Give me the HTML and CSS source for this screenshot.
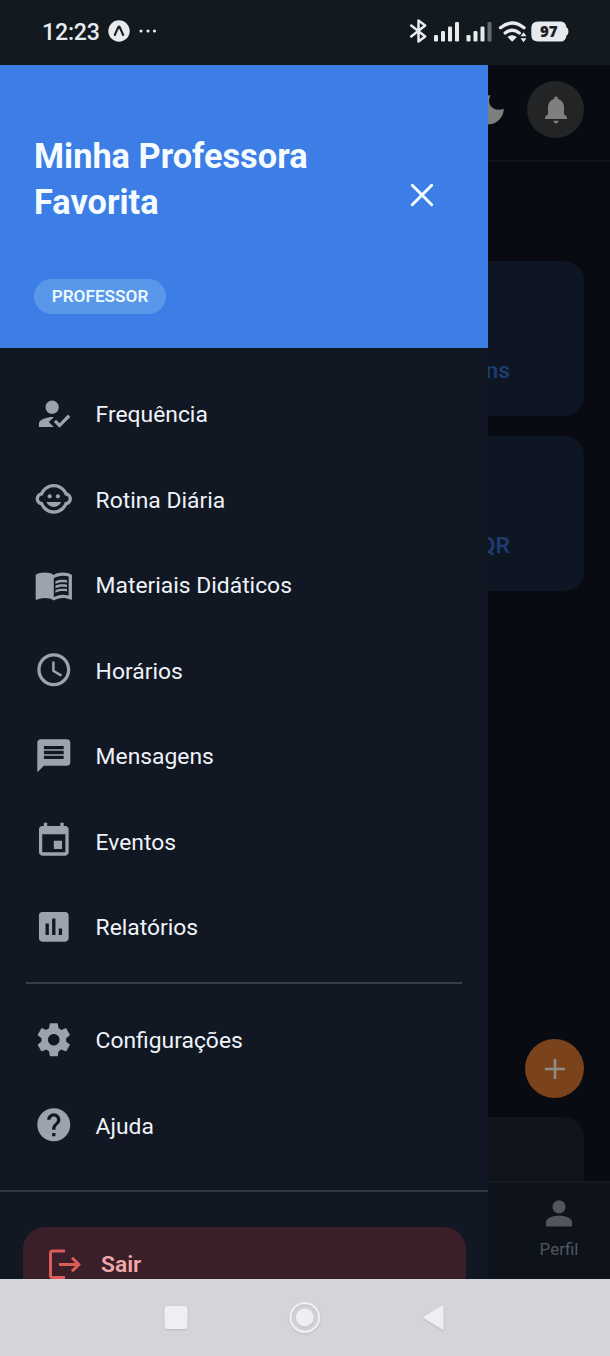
FILE: index.html
```html
<!DOCTYPE html>
<html lang="pt-BR">
<head>
<meta charset="utf-8">
<title>Minha Professora Favorita</title>
<link rel="stylesheet" href="styles.css">
</head>
<body>
<div class="phone">
  <header class="status">
    <span class="clock">12:23</span>
    <svg class="expo" width="22" height="22" viewBox="0 0 22 22"><circle cx="11" cy="11" r="10.7" fill="#e8ebee"/><path d="M6.8 15 L10.2 7.3 Q11 6 11.8 7.3 L15.2 15" fill="none" stroke="#1b2025" stroke-width="2.1" stroke-linecap="round"/></svg>
    <svg class="dots" width="20" height="6" viewBox="0 0 20 6" fill="#e8ebee"><circle cx="3" cy="3" r="1.6"/><circle cx="10" cy="3" r="1.6"/><circle cx="16.500" cy="3" r="1.6"/></svg>
    <span class="spacer"></span>
    <svg class="signals" width="160" height="26" viewBox="0 0 160 26" fill="#e8ebee">
      <path d="M2.200 7.500 L16.200 18.500 L9.500 23.500 V2.500 L16.200 7.500 L2.200 18.500" fill="none" stroke="#e8ebee" stroke-width="2.500" stroke-linejoin="round" stroke-linecap="round"/>
      <rect x="25" y="17" width="4" height="6.500" rx="1.300"/><rect x="32" y="13" width="4" height="10.500" rx="1.300"/><rect x="39" y="8.500" width="4" height="15" rx="1.300"/><rect x="46" y="4" width="4" height="19.500" rx="1.300"/>
      <rect x="57.500" y="17" width="4" height="6.500" rx="1.300"/><rect x="64.500" y="13" width="4" height="10.500" rx="1.300"/><rect x="71.500" y="8.500" width="4" height="15" rx="1.300"/><rect x="78.500" y="4" width="4" height="19.500" rx="1.300" fill="#666b70"/>
      <g fill="none" stroke="#e8ebee" stroke-width="3.300" stroke-linecap="round"><path d="M91.500 9.800 Q103.200 0.300 115 9.800"/><path d="M96.200 15 Q103.200 9.400 110.300 15"/></g>
      <path d="M98.500 19 Q103.200 15.500 107.900 19 L103.200 23.800 Z"/>
      <path d="M114.500 14.300 l3 3.900 h-6 z M114.500 24.200 l3 -3.900 h-6 z"/>
      <path d="M129 3.500 H152 Q156.500 3.500 157.600 9.500 Q159.500 10.200 159.500 13.500 Q159.500 16.800 157.600 17.500 Q156.500 23.500 152 23.500 H129 Q122.300 23.500 122.300 17 V10 Q122.300 3.500 129 3.500Z"/>
      <text x="139.800" y="18.800" text-anchor="middle" class="battery">97</text>
    </svg>
  </header>

  <main class="screen">
    <nav class="drawer">
      <div class="drawer-head">
        <div class="title-row">
          <h1>Minha Professora Favorita</h1>
          <svg class="close" width="24" height="24" viewBox="0 0 24 24"><path d="M2.300 2.300 21.700 21.700M21.700 2.300 2.300 21.700" stroke="#f5fcff" stroke-width="3" stroke-linecap="round"/></svg>
        </div>
        <span class="chip">PROFESSOR</span>
      </div>
      <ul class="menu">
        <li><svg viewBox="0 0 24 24"><path d="M9 17l3-2.940c-.39-.04-.68-.06-1-.06-2.670 0-8 1.340-8 4v2h9l-3-3zm2-5c2.210 0 4-1.790 4-4s-1.790-4-4-4-4 1.790-4 4 1.790 4 4 4m4.470 8.500L12 17l1.400-1.410 2.070 2.080 5.130-5.170 1.400 1.410z"/></svg><span>Frequência</span></li>
        <li><svg viewBox="0 0 24 24"><circle cx="14.500" cy="10.500" r="1.250"/><circle cx="9.500" cy="10.500" r="1.250"/><path d="M22.940 12.660c.04-.21.06-.43.06-.66s-.02-.45-.06-.66c-.25-1.510-1.360-2.740-2.810-3.170-.53-1.120-1.280-2.100-2.190-2.910C16.360 3.850 14.280 3 12 3s-4.360.85-5.940 2.260c-.92.81-1.670 1.800-2.190 2.910-1.450.43-2.560 1.650-2.810 3.170-.04.21-.06.43-.06.66s.02.45.06.66c.25 1.510 1.360 2.740 2.810 3.170.52 1.110 1.270 2.090 2.170 2.890C7.620 20.140 9.710 21 12 21s4.380-.86 5.970-2.280c.9-.8 1.650-1.790 2.170-2.890 1.440-.43 2.550-1.650 2.800-3.170zM19 14c-.1 0-.19-.02-.29-.03-.2.67-.49 1.290-.86 1.860C16.600 17.740 14.450 19 12 19s-4.600-1.260-5.850-3.170c-.37-.57-.66-1.190-.86-1.860-.1.01-.19.03-.29.03-1.100 0-2-.9-2-2s.9-2 2-2c.1 0 .19.02.29.03.2-.67.49-1.290.86-1.860C7.400 6.260 9.550 5 12 5s4.600 1.260 5.850 3.170c.37.57.66 1.190.86 1.860.1-.01.19-.03.29-.03 1.100 0 2 .9 2 2s-.9 2-2 2zM7.500 14c.76 1.770 2.490 3 4.500 3s3.740-1.230 4.500-3h-9z"/></svg><span>Rotina Diária</span></li>
        <li><svg viewBox="0 0 24 24"><path d="M21 5c-1.110-.35-2.330-.5-3.500-.5-1.950 0-4.050.4-5.500 1.500-1.450-1.100-3.550-1.500-5.500-1.500S2.450 4.900 1 6v14.650c0 .25.25.5.5.5.1 0 .15-.05.25-.05C3.100 20.450 5.050 20 6.500 20c1.950 0 4.050.4 5.500 1.500 1.350-.85 3.800-1.500 5.500-1.500 1.650 0 3.350.3 4.750 1.050.1.05.15.05.25.05.25 0 .5-.25.5-.5V6c-.6-.45-1.250-.75-2-1zm0 13.500c-1.100-.35-2.300-.5-3.500-.5-1.700 0-4.150.65-5.500 1.500V8c1.350-.85 3.800-1.500 5.500-1.500 1.200 0 2.400.15 3.500.5v11.500z"/><path d="M17.500 10.500c.88 0 1.730.09 2.500.26V9.240c-.79-.15-1.640-.24-2.500-.24-1.700 0-3.240.29-4.500.83v1.660c1.130-.64 2.700-.99 4.500-.99zM13 12.490v1.660c1.130-.64 2.700-.99 4.500-.99.88 0 1.730.09 2.500.26V11.900c-.79-.15-1.640-.24-2.500-.24-1.700 0-3.240.3-4.500.83zM17.500 14.330c-1.700 0-3.240.29-4.500.83v1.660c1.130-.64 2.700-.99 4.500-.99.88 0 1.730.09 2.500.26v-1.520c-.79-.16-1.640-.24-2.500-.24z"/></svg><span>Materiais Didáticos</span></li>
        <li><svg viewBox="0 0 24 24"><path d="M11.990 2C6.470 2 2 6.480 2 12s4.470 10 9.990 10C17.520 22 22 17.520 22 12S17.520 2 11.990 2zM12 20c-4.420 0-8-3.580-8-8s3.580-8 8-8 8 3.580 8 8-3.580 8-8 8zm.5-13H11v6l5.250 3.150.75-1.230-4.500-2.670z"/></svg><span>Horários</span></li>
        <li><svg viewBox="0 0 24 24"><path d="M20 2H4c-1.100 0-1.990.9-1.990 2L2 22l4-4h14c1.100 0 2-.9 2-2V4c0-1.100-.9-2-2-2zm-2 12H6v-2h12v2zm0-3H6V9h12v2zm0-3H6V6h12v2z"/></svg><span>Mensagens</span></li>
        <li><svg viewBox="0 0 24 24"><path d="M17 12h-5v5h5v-5zM16 1v2H8V1H6v2H5c-1.110 0-1.990.9-1.990 2L3 19c0 1.100.89 2 2 2h14c1.100 0 2-.9 2-2V5c0-1.100-.9-2-2-2h-1V1h-2zm3 18H5V8h14v11z"/></svg><span>Eventos</span></li>
        <li><svg viewBox="0 0 24 24"><path d="M19 3H5c-1.100 0-2 .9-2 2v14c0 1.100.9 2 2 2h14c1.100 0 2-.9 2-2V5c0-1.100-.9-2-2-2zM9 17H7v-7h2v7zm4 0h-2V7h2v10zm4 0h-2v-4h2v4z"/></svg><span>Relatórios</span></li>
      </ul>
      <div class="divider"></div>
      <ul class="menu menu-secondary">
        <li><svg viewBox="0 0 24 24"><path d="M19.430 12.980c.04-.32.07-.64.07-.98s-.03-.66-.07-.98l2.110-1.650c.19-.15.24-.42.12-.64l-2-3.460c-.12-.22-.39-.3-.61-.22l-2.490 1c-.52-.4-1.080-.73-1.690-.98l-.38-2.650C14.460 2.180 14.250 2 14 2h-4c-.25 0-.46.18-.49.42l-.38 2.650c-.61.25-1.170.59-1.690.98l-2.490-1c-.23-.09-.49 0-.61.22l-2 3.460c-.13.22-.07.49.12.64l2.110 1.650c-.04.32-.07.65-.07.98s.03.66.07.98l-2.110 1.650c-.19.15-.24.42-.12.64l2 3.460c.12.22.39.3.61.22l2.490-1c.52.4 1.080.73 1.690.98l.38 2.650c.03.24.24.42.49.42h4c.25 0 .46-.18.49-.42l.38-2.650c.61-.25 1.170-.59 1.690-.98l2.490 1c.23.09.49 0 .61-.22l2-3.460c.12-.22.07-.49-.12-.64l-2.110-1.650zM12 15.500c-1.930 0-3.500-1.570-3.500-3.500s1.570-3.500 3.500-3.500 3.500 1.570 3.500 3.500-1.570 3.500-3.500 3.500z"/></svg><span>Configurações</span></li>
        <li><svg viewBox="0 0 24 24"><path d="M12 2C6.480 2 2 6.480 2 12s4.480 10 10 10 10-4.480 10-10S17.520 2 12 2zm1 17h-2v-2h2v2zm2.070-7.750l-.9.92C13.450 12.900 13 13.500 13 15h-2v-.5c0-1.100.45-2.100 1.170-2.830l1.240-1.260c.37-.36.59-.86.59-1.410 0-1.100-.9-2-2-2s-2 .9-2 2H8c0-2.210 1.790-4 4-4s4 1.790 4 4c0 .88-.36 1.680-.93 2.250z"/></svg><span>Ajuda</span></li>
      </ul>
      <div class="drawer-foot">
        <div class="logout">
          <svg width="34" height="32" viewBox="0 0 34 32" fill="none" stroke="#dd5b58" stroke-width="3"><path d="M17 2H4.500Q2.500 2 2.500 4V26.500Q2.500 28.500 4.500 28.500H17"/><path d="M11 15.500H31.500M24 8.700 30.800 15.500 24 22.300"/></svg>
          <span>Sair</span>
        </div>
      </div>
    </nav>

    <section class="page">
      <div class="topbar">
        <svg class="moon" width="19" height="32" viewBox="0 0 19 32"><path d="M0 1.200 L2.500 1.500 C-1.500 9 3.500 18.500 15.800 14.800 C15.500 25 7 31 0 30.200Z" fill="#7e7f80"/></svg>
        <div class="bell"><svg width="24" height="28" viewBox="0 0 24 28" fill="#7e7f80"><path d="M12 .5C13.500 .5 14 1.500 14 3C18 4 20 7.500 20 11.500V18L23 21V23H1V21L4 18V11.500C4 7.500 6 4 10 3C10 1.500 10.500 .5 12 .5Z"/><path d="M9.300 24.700H14.700Q14 27.400 12 27.400T9.300 24.700Z"/></svg></div>
      </div>
      <div class="cards">
        <div class="card">ns</div>
        <div class="card">QR</div>
      </div>
      <div class="lower">
        <div class="fab"><svg width="20" height="20" viewBox="0 0 20 20"><path d="M10 0V20M0 10H20" stroke="#918a85" stroke-width="2.600"/></svg></div>
        <div class="panel"></div>
      </div>
      <div class="tabbar">
        <svg width="26" height="27" viewBox="0 0 26 27" fill="#50555e"><circle cx="13" cy="6.800" r="6.600"/><path d="M0 26.500V22C0 17.500 8 15.700 13 15.700S26 17.500 26 22V26.500Z"/></svg>
        <span>Perfil</span>
      </div>
    </section>
  </main>

  <footer class="sysnav">
    <svg width="610" height="77" viewBox="0 0 610 77">
      <g class="keys" fill="#eeeff3"><rect x="164.500" y="27" width="23" height="23" rx="3.500"/><circle cx="304.800" cy="38.500" r="9"/><path d="M422.500 38.500 442 26.500Q443.500 26 443.500 27.500V49.500Q443.500 51 442 50.200Z"/></g>
      <circle class="keys" cx="304.800" cy="38.500" r="14.300" fill="none" stroke="#eeeff3" stroke-width="2.300"/>
    </svg>
  </footer>
</div>
</body>
</html>
```
FILE: styles.css
```css
* { box-sizing: border-box; }
body { margin: 0; font-family: Roboto, "Liberation Sans", sans-serif; background: #080b11; }
svg { display: block; flex: none; }
.phone { width: 610px; height: 1356px; display: grid; grid-template-rows: 65px 1214px 77px; overflow: hidden; }

.status { display: flex; align-items: center; padding: 0 41px 3px 42px; background: #12191f; color: #e8ebee; }
.clock { width: 58px; font-size: 23.200px; font-weight: 500; letter-spacing: -0.200px; line-height: 28px; padding-top: 2px; }
.expo { margin-left: 8px; }
.dots { margin-left: 8px; }
.spacer { flex: 1; }
.battery { font: 800 15px "Open Sans", Roboto, sans-serif; fill: #1b2025; }

.screen { display: grid; grid-template-columns: 488px 122px; overflow: hidden; }
.drawer { display: flex; flex-direction: column; background: #111824; overflow: hidden; }
.drawer-head { flex: none; height: 283px; padding: 68px 54px 0 34px; background: #3d7de6; }
.title-row { display: flex; justify-content: space-between; height: 146px; }
h1 { margin: 0; width: 300px; font-size: 34.350px; line-height: 46px; font-weight: 700; color: #f5fcff; }
.close { margin-top: 50px; }
.chip { display: flex; align-items: center; justify-content: center; width: 132px; height: 35px; padding-bottom: 1px; border-radius: 18px; background: #5897e9; color: #ecf8ff; font-size: 17.200px; font-weight: 600; }
.menu { flex: none; list-style: none; margin: 0; padding: 23px 34px 0; }
.menu li { display: flex; align-items: center; gap: 22.500px; height: 85.500px; font-size: 22.850px; color: #eff3f8; }
.menu li span { padding-top: 2px; }
.menu svg { width: 39.600px; height: 39.600px; margin-left: -0.500px; fill: #9ca3af; }
.divider { flex: none; height: 2px; margin: 12px 26px 0; background: #343c48; }
.menu-secondary { padding-top: 13.500px; }
.drawer-foot { flex: none; margin-top: 21.500px; padding: 35px 22px 0 23px; border-top: 2px solid #303844; }
.logout { display: flex; gap: 19px; height: 86px; padding: 22px 25px 0; border-radius: 22px; background: #3a1f29; color: #f0a7aa; font-size: 22.800px; line-height: 30px; font-weight: 600; }
.logout span { padding-top: 1px; }

.page { display: flex; flex-direction: column; min-width: 0; overflow: hidden; background: #080b11; }
.topbar { flex: none; display: flex; justify-content: space-between; height: 97px; padding: 16px 26px 0 0; border-bottom: 2px solid #10131b; }
.moon { margin-top: 13px; }
.bell { display: flex; align-items: center; justify-content: center; width: 57px; height: 57px; border-radius: 50%; background: #222426; }
.cards { flex: none; display: grid; grid-template-columns: 96px; gap: 20px; padding-top: 99px; }
.card { min-width: 0; height: 155px; padding: 95px 0 0; display: flex; justify-content: flex-end; border-right: 74px solid #0d1622; border-radius: 0 20px 20px 0; background: #0d1622; color: #1d3c70; font-size: 22.800px; line-height: 30px; font-weight: 600; white-space: nowrap; }
.lower { flex: 1; display: flex; flex-direction: column; justify-content: flex-end; padding-right: 26px; }
.fab { display: flex; align-items: center; justify-content: center; align-self: flex-end; width: 59px; height: 59px; margin-bottom: 19px; border-radius: 50%; background: #7a431c; }
.panel { height: 64px; border-radius: 0 20px 0 0; background: #11141a; }
.tabbar { flex: none; display: flex; flex-direction: column; align-items: center; height: 98px; padding: 17px 0 0 20px; border-top: 2px solid #151a22; background: #0e131b; color: #50555e; font-size: 17px; line-height: 22px; font-weight: 400; }
.tabbar span { margin-top: 11px; }

.sysnav { background: #d4d5d9; }
.keys { filter: drop-shadow(0 1px 1px #b9bbc1); }
```
